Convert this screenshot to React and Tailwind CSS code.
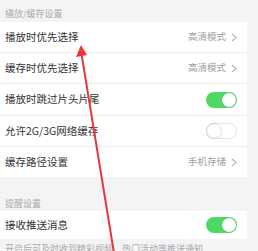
import React from "react";

const font = { fontFamily: '"Noto Sans CJK SC", "Noto Sans", sans-serif' };

function Chevron() {
  return (
    <svg width="6" height="9" viewBox="0 0 6 9" className="ml-[5px]">
      <path d="M1 1 L5 4.5 L1 8" fill="none" stroke="#b5b5b5" strokeWidth="1.1" />
    </svg>
  );
}

function Toggle({ on }) {
  return on ? (
    <div className="w-[31px] h-[16px] rounded-full bg-[#4cd964] flex items-center justify-end pr-[1px]">
      <div className="w-[14px] h-[14px] rounded-full bg-white shadow-[0_0_1px_rgba(0,0,0,0.3)]" />
    </div>
  ) : (
    <div className="w-[31px] h-[16px] rounded-full bg-white border border-[#e3e3e3] flex items-center">
      <div className="w-[14px] h-[14px] rounded-full bg-white shadow-[0_0_2px_rgba(0,0,0,0.35)]" />
    </div>
  );
}

function Row({ label, value, toggle, last, h = "h-[31px]" }) {
  return (
    <div
      className={`${h} mr-[11px] bg-white flex items-center justify-between pl-[5px] pr-[10px] ${
        last ? "" : "border-b border-[#ececec]"
      }`}
    >
      <span className="text-[10.5px] text-[#333] leading-none">{label}</span>
      {value !== undefined ? (
        <span className="flex items-center text-[9.5px] text-[#a0a0a0] leading-none">
          {value}
          <Chevron />
        </span>
      ) : (
        <Toggle on={toggle} />
      )}
    </div>
  );
}

export default function App() {
  return (
    <div className="relative w-[258px] h-[251px] overflow-hidden bg-[#f4f4f6]" style={font}>
      <div className="h-[22px] flex items-end pb-[4px] pl-[5px] text-[9px] text-[#aaa] leading-none">
        播放/缓存设置
      </div>
      <Row label="播放时优先选择" value="高清模式" />
      <Row label="缓存时优先选择" value="高清模式" />
      <Row label="播放时跳过片头片尾" toggle={true} h="h-[32px]" />
      <Row label="允许2G/3G网络缓存" toggle={false} />
      <Row label="缓存路径设置" value="手机存储" h="h-[30px]" last />
      <div className="h-[34px] flex items-end pb-[3px] pl-[5px] text-[9px] text-[#aaa] leading-none">
        提醒设置
      </div>
      <Row label="接收推送消息" toggle={true} h="h-[28px]" last />
      <div className="pt-[5px] pl-[5px] text-[9px] text-[#aaa] leading-none whitespace-nowrap">
        开启后可及时收到精彩视频、热门活动等推送通知
      </div>
      <svg className="absolute left-0 top-0" width="258" height="251" viewBox="0 0 258 251">
        <line x1="81.5" y1="54" x2="114" y2="253" stroke="#e8373a" strokeWidth="2" />
        <polygon points="81,45 76,57 87,55" fill="#e8373a" />
      </svg>
    </div>
  );
}
